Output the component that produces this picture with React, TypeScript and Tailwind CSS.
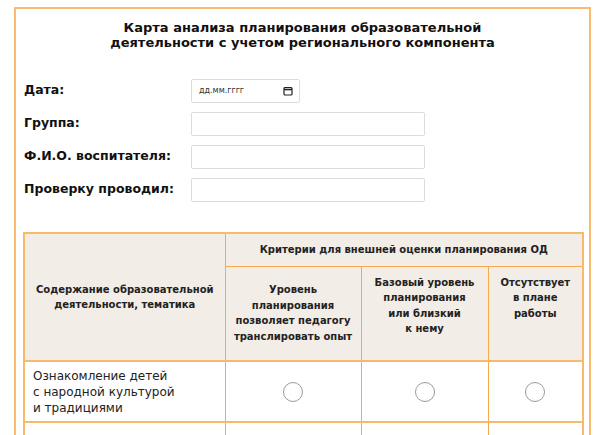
import type { ReactNode } from "react";

const font = { fontFamily: '"DejaVu Sans", Verdana, sans-serif' };

function Field({ label, children }: { label: string; children: ReactNode }) {
  return (
    <div className="flex h-[33px] items-center">
      <div className="w-[167px] shrink-0 text-[12.5px] font-bold text-[#111]">{label}</div>
      {children}
    </div>
  );
}

function TextBox() {
  return <div className="h-[24px] w-[234px] rounded-[2px] border border-[#dcdcdc] bg-white" />;
}

function DateBox() {
  return (
    <div className="flex h-[24px] w-[109px] items-center justify-between rounded-[2px] border border-[#dcdcdc] bg-white pl-[7px] pr-[6px]">
      <span className="text-[8px] text-[#333]">дд.мм.гггг</span>
      <svg width="10" height="10" viewBox="0 0 10 10" fill="none" stroke="#222" strokeWidth="1.2">
        <rect x="1" y="1.5" width="8" height="7.5" rx="1" />
        <line x1="1" y1="3.5" x2="9" y2="3.5" strokeWidth="1.6" />
      </svg>
    </div>
  );
}

function Radio() {
  return <span className="inline-block h-[20px] w-[20px] rounded-full border-[1.5px] border-[#9a9a9a] bg-white align-middle" />;
}

const cell = "border border-[#f9a94b]";
const rowTop = "border-t-2 border-t-[#f9b86a]";

export default function App() {
  return (
    <div className="h-[435px] overflow-hidden bg-white" style={font}>
      <div className="ml-[14px] mt-[7px] h-[440px] w-[577px] border-2 border-[#fbbb6e] px-[7px]">
        <h1 className="pt-[11px] text-center text-[13px] font-bold leading-[15px] text-[#111]">
          Карта анализа планирования образовательной
          <br />
          деятельности с учетом регионального компонента
        </h1>

        <div className="mt-[24px] pl-[1px]">
          <Field label="Дата:">
            <DateBox />
          </Field>
          <Field label="Группа:">
            <TextBox />
          </Field>
          <Field label="Ф.И.О. воспитателя:">
            <TextBox />
          </Field>
          <Field label="Проверку проводил:">
            <TextBox />
          </Field>
        </div>

        <table className="mt-[26px] w-[559px] table-fixed border-collapse border-2 border-[#f9b86a] text-[#222]">
          <colgroup>
            <col className="w-[201px]" />
            <col className="w-[136px]" />
            <col className="w-[127px]" />
            <col className="w-[95px]" />
          </colgroup>
          <thead className="bg-[#f2ede6] text-[10px] font-bold leading-[15.5px]">
            <tr className="h-[33px]">
              <th rowSpan={2} className={`${cell} align-middle font-bold`}>
                Содержание образовательной
                <br />
                деятельности, тематика
              </th>
              <th colSpan={3} className={`${cell} align-middle font-bold`}>
                Критерии для внешней оценки планирования ОД
              </th>
            </tr>
            <tr className="h-[95px]">
              <th className={`${cell} align-middle font-bold`}>
                Уровень
                <br />
                планирования
                <br />
                позволяет педагогу
                <br />
                транслировать опыт
              </th>
              <th className={`${cell} pt-[8px] align-top font-bold`}>
                Базовый уровень
                <br />
                планирования
                <br />
                или близкий
                <br />к нему
              </th>
              <th className={`${cell} pt-[8px] align-top font-bold`}>
                Отсутствует
                <br />в плане
                <br />
                работы
              </th>
            </tr>
          </thead>
          <tbody className="text-[12px] leading-[16px]">
            <tr className="h-[61px]">
              <td className={`${cell} ${rowTop} pl-[8px] align-middle`}>
                Ознакомление детей
                <br />с народной культурой
                <br />и традициями
              </td>
              <td className={`${cell} ${rowTop} text-center align-middle`}>
                <Radio />
              </td>
              <td className={`${cell} ${rowTop} text-center align-middle`}>
                <Radio />
              </td>
              <td className={`${cell} ${rowTop} text-center align-middle`}>
                <Radio />
              </td>
            </tr>
            <tr className="h-[62px]">
              <td className={`${cell} ${rowTop} pl-[8px] pt-[11px] align-top`}>
                Знакомство с природой
                <br />
                родного края
              </td>
              <td className={`${cell} ${rowTop}`} />
              <td className={`${cell} ${rowTop}`} />
              <td className={`${cell} ${rowTop}`} />
            </tr>
          </tbody>
        </table>
      </div>
    </div>
  );
}
